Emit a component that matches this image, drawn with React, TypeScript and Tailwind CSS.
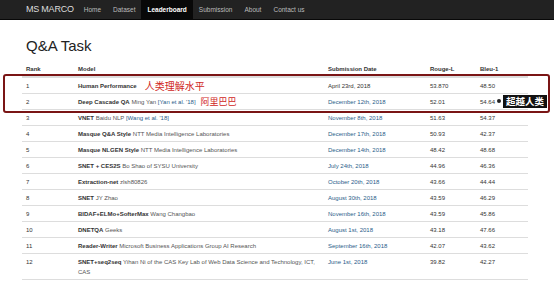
const rows = [
  { rank: '1', name: 'Human Performance', by: '', cite: '', date: 'April 23rd, 2018', link: false, rouge: '53.870', bleu: '48.50' },
  { rank: '2', name: 'Deep Cascade QA', by: 'Ming Yan', cite: "[Yan et al. '18]", date: 'December 12th, 2018', link: true, rouge: '52.01', bleu: '54.64' },
  { rank: '3', name: 'VNET', by: 'Baidu NLP', cite: "[Wang et al. '18]", date: 'November 8th, 2018', link: true, rouge: '51.63', bleu: '54.37' },
  { rank: '4', name: 'Masque Q&A Style', by: 'NTT Media Intelligence Laboratories', cite: '', date: 'December 17th, 2018', link: true, rouge: '50.93', bleu: '42.37' },
  { rank: '5', name: 'Masque NLGEN Style', by: 'NTT Media Intelligence Laboratories', cite: '', date: 'December 14th, 2018', link: true, rouge: '48.42', bleu: '48.68' },
  { rank: '6', name: 'SNET + CES2S', by: 'Bo Shao of SYSU University', cite: '', date: 'July 24th, 2018', link: true, rouge: '44.96', bleu: '46.36' },
  { rank: '7', name: 'Extraction-net', by: 'zlsh80826', cite: '', date: 'October 20th, 2018', link: true, rouge: '43.66', bleu: '44.44' },
  { rank: '8', name: 'SNET', by: 'JY Zhao', cite: '', date: 'August 30th, 2018', link: true, rouge: '43.59', bleu: '46.29' },
  { rank: '9', name: 'BIDAF+ELMo+SofterMax', by: 'Wang Changbao', cite: '', date: 'November 16th, 2018', link: true, rouge: '43.59', bleu: '45.86' },
  { rank: '10', name: 'DNETQA', by: 'Geeks', cite: '', date: 'August 1st, 2018', link: true, rouge: '43.18', bleu: '47.66' },
  { rank: '11', name: 'Reader-Writer', by: 'Microsoft Business Applications Group AI Research', cite: '', date: 'September 16th, 2018', link: true, rouge: '42.07', bleu: '43.62' },
  { rank: '12', name: 'SNET+seq2seq', by: 'Yihan Ni of the CAS Key Lab of Web Data Science and Technology, ICT, CAS', cite: '', date: 'June 1st, 2018', link: true, rouge: '39.82', bleu: '42.27' },
]

const navLinks = ['Home', 'Dataset', 'Leaderboard', 'Submission', 'About', 'Contact us']

const App = () => {
  return (
    <div className="relative w-[554px] h-[283px] overflow-hidden bg-white font-['Liberation_Sans',Arial,sans-serif] text-[#333]">
      <div className="h-[20px] bg-[#222] border-b border-[#080808] flex items-center pl-[26px]">
        <span className="text-[9px] text-[#ddd] mr-[4px] tracking-tight">MS MARCO</span>
        {navLinks.map((l) => (
          <span
            key={l}
            className={
              l === 'Leaderboard'
                ? 'h-full flex items-center px-[6px] bg-[#080808] text-white font-bold text-[6.5px]'
                : 'h-full flex items-center px-[6px] text-[#bbb] text-[6.5px]'
            }
          >
            {l}
          </span>
        ))}
      </div>

      <div className="pl-[22px] pr-[26px]">
        <h1 className="text-[15px] leading-none pl-[4px] pt-[18px] pb-[8px] text-[#222]">Q&amp;A Task</h1>
        <table className="w-[506px] table-fixed border-collapse text-[6px] leading-[10px]">
          <colgroup>
            <col className="w-[52px]" />
            <col className="w-[250px]" />
            <col className="w-[102px]" />
            <col className="w-[50px]" />
            <col className="w-[52px]" />
          </colgroup>
          <thead>
            <tr className="font-bold text-left border-b-2 border-[#ddd]">
              <th className="px-[4px] py-[2.5px]">Rank</th>
              <th className="px-[4px] py-[2.5px]">Model</th>
              <th className="px-[4px] py-[2.5px]">Submission Date</th>
              <th className="px-[4px] py-[2.5px]">Rouge-L</th>
              <th className="px-[4px] py-[2.5px]">Bleu-1</th>
            </tr>
          </thead>
          <tbody>
            {rows.map((r) => (
              <tr key={r.rank} className="border-b border-[#ddd] align-top">
                <td className="px-[4px] py-[2.5px]">{r.rank}</td>
                <td className="px-[4px] py-[2.5px]">
                  <b>{r.name}</b>
                  {r.by && <span className="text-[#555]"> {r.by}</span>}
                  {r.cite && <span className="text-[#2a5d8a]"> {r.cite}</span>}
                  {r.rank === '1' && (
                    <span className="inline-block h-[10px] align-top ml-[8px] text-[10px] leading-[10px] text-[#d0261c] font-['Noto_Sans_CJK_SC',sans-serif]">人类理解水平</span>
                  )}
                  {r.rank === '2' && (
                    <span className="inline-block h-[10px] align-top ml-[5px] text-[9px] leading-[10px] text-[#d0261c] font-['Noto_Sans_CJK_SC',sans-serif]">阿里巴巴</span>
                  )}
                </td>
                <td className={r.link ? 'px-[4px] py-[2.5px] text-[#2a5d8a]' : 'px-[4px] py-[2.5px]'}>{r.date}</td>
                <td className="px-[4px] py-[2.5px]">{r.rouge}</td>
                <td className="px-[4px] py-[2.5px]">{r.bleu}</td>
              </tr>
            ))}
          </tbody>
        </table>
      </div>

      {/* highlight box over top two rows */}
      <div className="absolute left-[3px] top-[74px] w-[547px] h-[39px] border-2 border-[#7a1515] rounded-[3px] pointer-events-none" />
      <div className="absolute left-[497px] top-[99px] w-[4px] h-[4px] rounded-full bg-[#222]" />
      <div className="absolute left-[503px] top-[95px] h-[13px] px-[3px] flex items-center bg-[#111] text-white text-[9.5px] font-bold font-['Noto_Sans_CJK_SC',sans-serif]">
        超越人类
      </div>
    </div>
  )
}

export default App
